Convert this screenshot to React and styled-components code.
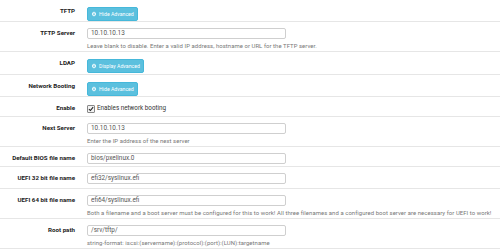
import styled, { createGlobalStyle } from 'styled-components'

const GlobalStyle = createGlobalStyle`
    body {
        margin: 0;
        background: #fff;
        font-family: Roboto, "Liberation Sans", sans-serif;
        color: #333;
    }
`

const Form = styled.div`
    width: 500px;
    display: flex;
    flex-direction: column;
`

const Row = styled.div`
    display: grid;
    grid-template-columns: 75px 1fr;
    column-gap: 12px;
    padding: ${props => props.$pad || '6px 0 4px 0'};
    border-bottom: 1px solid #e6e6e6;
    box-sizing: border-box;
    height: ${props => props.$h}px;
`

const Label = styled.div`
    text-align: right;
    font-size: 6.2px;
    font-weight: 700;
    line-height: 11px;
    white-space: nowrap;
    color: #222;
`

const Field = styled.div`
    display: flex;
    flex-direction: column;
    align-items: flex-start;
`

const Input = styled.div`
    width: 199px;
    height: 11px;
    box-sizing: border-box;
    border: 1px solid #cfcfcf;
    border-radius: 2px;
    padding: 0 3px;
    font-size: 6.4px;
    line-height: 9px;
    color: #555;
`

const Help = styled.div`
    margin-top: 3px;
    font-size: 5.95px;
    letter-spacing: 0.06px;
    line-height: 8px;
    color: #777;
    white-space: nowrap;
`

const Button = styled.div`
    display: flex;
    align-items: center;
    gap: 2px;
    height: 14px;
    box-sizing: border-box;
    padding: 0 3px 0 3px;
    background: #5bc0de;
    border: 1px solid #46b8da;
    border-radius: 2px;
    color: #fff;
    font-size: 5.2px;
    margin-top: 1px;
`

const Check = styled.label`
    display: flex;
    align-items: center;
    gap: 2px;
    font-size: 6.3px;
    line-height: 11px;
    color: #333;
`

const Box = styled.span`
    width: 8px;
    height: 8px;
    box-sizing: border-box;
    border: 1px solid #888;
    border-radius: 1px;
    background: #f2f2f2;
    display: flex;
    align-items: center;
    justify-content: center;
`

function Gear() {
    return (
        <svg width="6" height="6" viewBox="0 0 24 24" fill="#fff">
            <path d="M19.4 13a7.5 7.5 0 0 0 0-2l2.1-1.6-2-3.5-2.5 1a7.6 7.6 0 0 0-1.7-1L15 3h-4l-.4 2.9a7.6 7.6 0 0 0-1.7 1l-2.5-1-2 3.5L6.6 11a7.5 7.5 0 0 0 0 2l-2.2 1.6 2 3.5 2.5-1a7.6 7.6 0 0 0 1.7 1L11 21h4l.4-2.9a7.6 7.6 0 0 0 1.7-1l2.5 1 2-3.5zM13 15.5a3.5 3.5 0 1 1 0-7 3.5 3.5 0 0 1 0 7z" transform="translate(-1 0)" />
        </svg>
    )
}

function AdvButton({ text }) {
    return (
        <Button><Gear />{text}</Button>
    )
}

const rows = [
    { label: 'Next Server', value: '10.10.10.13', help: 'Enter the IP address of the next server', h: 30 },
    { label: 'Default BIOS file name', value: 'bios/pxelinux.0', h: 20 },
    { label: 'UEFI 32 bit file name', value: 'efi32/syslinux.efi', h: 22 },
    { label: 'UEFI 64 bit file name', value: 'efi64/syslinux.efi', help: 'Both a filename and a boot server must be configured for this to work! All three filenames and a configured boot server are necessary for UEFI to work!', h: 30 },
    { label: 'Root path', value: '/srv/tftp/', help: 'string-format: iscsi:(servername):(protocol):(port):(LUN):targetname', h: 30 },
]

export default function App() {
    return (
        <>
            <GlobalStyle />
            <Form>
                <Row $h={22} $pad="6px 0 0 0">
                    <Label>TFTP</Label>
                    <Field><AdvButton text="Hide Advanced" /></Field>
                </Row>
                <Row $h={30}>
                    <Label>TFTP Server</Label>
                    <Field>
                        <Input>10.10.10.13</Input>
                        <Help>Leave blank to disable. Enter a valid IP address, hostname or URL for the TFTP server.</Help>
                    </Field>
                </Row>
                <Row $h={23} $pad="6px 0 0 0">
                    <Label>LDAP</Label>
                    <Field><AdvButton text="Display Advanced" /></Field>
                </Row>
                <Row $h={22} $pad="6px 0 0 0">
                    <Label>Network Booting</Label>
                    <Field><AdvButton text="Hide Advanced" /></Field>
                </Row>
                <Row $h={20}>
                    <Label>Enable</Label>
                    <Field>
                        <Check>
                            <Box>
                                <svg width="6" height="6" viewBox="0 0 10 10">
                                    <path d="M1.5 5.2 L4 7.6 L8.6 2" stroke="#222" strokeWidth="1.8" fill="none" />
                                </svg>
                            </Box>
                            Enables network booting
                        </Check>
                    </Field>
                </Row>
                {rows.map(row => (
                    <Row key={row.label} $h={row.h}>
                        <Label>{row.label}</Label>
                        <Field>
                            <Input>{row.value}</Input>
                            {row.help && <Help>{row.help}</Help>}
                        </Field>
                    </Row>
                ))}
            </Form>
        </>
    )
}
